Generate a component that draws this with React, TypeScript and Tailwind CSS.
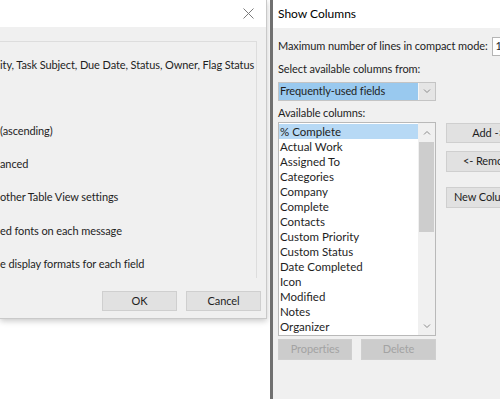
// Two Outlook-style dialogs side by side: view settings (left, clipped) and Show Columns (right).

const columns = [
  "% Complete",
  "Actual Work",
  "Assigned To",
  "Categories",
  "Company",
  "Complete",
  "Contacts",
  "Custom Priority",
  "Custom Status",
  "Date Completed",
  "Icon",
  "Modified",
  "Notes",
  "Organizer",
];

const settingLines = [
  { text: "ity, Task Subject, Due Date, Status, Owner, Flag Status", gap: "mt-[15px]" },
  { text: "(ascending)", gap: "mt-[50px]" },
  { text: "anced", gap: "mt-[17px]" },
  { text: "other Table View settings", gap: "mt-[17px]" },
  { text: "ed fonts on each message", gap: "mt-[18px]" },
  { text: "e display formats for each field", gap: "mt-[17px]" },
];

function Chevron({ up = false }: { up?: boolean }) {
  return (
    <svg width="8" height="5" viewBox="0 0 8 5" className="block">
      <polyline
        points={up ? "1,4.5 4,1.5 7,4.5" : "1,0.5 4,3.5 7,0.5"}
        fill="none"
        stroke="#8a8a8a"
        strokeWidth="1"
      />
    </svg>
  );
}

function WinButton({
  label,
  disabled,
  className = "",
}: {
  label: string;
  disabled?: boolean;
  className?: string;
}) {
  return (
    <div
      className={`flex h-[20px] shrink-0 items-center justify-center whitespace-nowrap border ${
        disabled
          ? "border-[#cfcfcf] bg-[#cccccc] text-[#a3a3a3]"
          : "border-[#cfcfcf] bg-[#e1e1e1] text-[#1e1e1e]"
      } ${className}`}
    >
      {label}
    </div>
  );
}

function SettingsDialog() {
  return (
    <div className="flex h-[319px] w-[267px] flex-col border-r border-b border-[#c9c9c9] shadow-[0_2px_6px_rgba(0,0,0,0.22)]">
      <div className="flex h-[27px] shrink-0 items-center justify-end bg-white pr-[12px]">
        <svg width="11" height="11" viewBox="0 0 11 11">
          <path d="M0.5 0.5 L10.5 10.5 M10.5 0.5 L0.5 10.5" stroke="#7a7a7a" strokeWidth="1" />
        </svg>
      </div>
      <div className="flex flex-1 flex-col bg-[#f0f0f0]">
        <div className="mt-[14px] h-[237px] w-[257px] border-t border-r border-[#dddddd]">
          {settingLines.map((l) => (
            <div key={l.text} className={`${l.gap} h-[16px] whitespace-nowrap leading-[16px] text-[#1e1e1e]`}>
              {l.text}
            </div>
          ))}
        </div>
        <div className="mt-[13px] flex justify-end gap-[9px] pr-[5px]">
          <WinButton label="OK" className="w-[75px]" />
          <WinButton label="Cancel" className="w-[75px]" />
        </div>
      </div>
    </div>
  );
}

function ShowColumnsDialog() {
  return (
    <div className="flex h-full flex-1 flex-col overflow-hidden border-l-[3px] border-[#707070]">
      <div className="flex h-[28px] shrink-0 items-center bg-white pl-[5px] text-[12px] tracking-normal text-black">
        Show Columns
      </div>
      <div className="flex flex-1 flex-col bg-[#f0f0f0] pl-[5px] text-[#1e1e1e]">
        <div className="mt-[9px] flex h-[19px] items-center whitespace-nowrap">
          <span>Maximum number of lines in compact mode:</span>
          <div className="ml-[4px] flex h-[19px] w-[40px] shrink-0 items-center border border-[#b5b5b5] bg-white pl-[3px]">
            1
          </div>
        </div>
        <div className="mt-[5px] h-[16px] leading-[16px]">Select available columns from:</div>
        <div className="mt-[5px] flex h-[19px] w-[158px] border border-[#c4c4c4] bg-[#e5e5e5]">
          <div className="flex w-[139px] items-center bg-[#99c9ef] pl-[1px]">Frequently-used fields</div>
          <div className="flex flex-1 items-center justify-center border-l border-[#f5f5f5]">
            <Chevron />
          </div>
        </div>
        <div className="mt-[4px] h-[16px] leading-[16px]">Available columns:</div>
        <div className="mt-[1px] flex">
          <div className="flex h-[214px] w-[158px] shrink-0 border border-[#b9b9b9] bg-white">
            <div className="flex-1 overflow-hidden pt-[1px]">
              {columns.map((c, i) => (
                <div
                  key={c}
                  className={`h-[15px] whitespace-nowrap pl-[1px] text-[11.5px] leading-[15px] tracking-normal ${
                    i === 0 ? "bg-[#b7d9f5]" : ""
                  }`}
                >
                  {c}
                </div>
              ))}
            </div>
            <div className="flex w-[17px] shrink-0 flex-col bg-[#f0f0f0]">
              <div className="flex h-[19px] items-center justify-center">
                <Chevron up />
              </div>
              <div className="mx-[1px] h-[90px] bg-[#cdcdcd]" />
              <div className="flex-1" />
              <div className="flex h-[18px] items-center justify-center">
                <Chevron />
              </div>
            </div>
          </div>
          <div className="ml-[10px] flex flex-col">
            <WinButton label="Add ->" className="mt-[1px] w-[85px]" />
            <WinButton label="<- Remove" className="mt-[8px] h-[21px] w-[85px]" />
            <WinButton label="New Column..." className="mt-[15px] h-[21px] w-[85px]" />
          </div>
        </div>
        <div className="mt-[3px] flex gap-[9px]">
          <WinButton label="Properties" disabled className="h-[21px] w-[74px]" />
          <WinButton label="Delete" disabled className="h-[21px] w-[75px]" />
        </div>
      </div>
    </div>
  );
}

export default function App() {
  return (
    <div className="flex h-[399px] w-[500px] overflow-hidden bg-white font-['Lato',sans-serif] text-[11px] tracking-[-0.1px]">
      <div className="w-[267px] shrink-0">
        <SettingsDialog />
      </div>
      <div className="w-[3px] shrink-0" />
      <ShowColumnsDialog />
    </div>
  );
}
